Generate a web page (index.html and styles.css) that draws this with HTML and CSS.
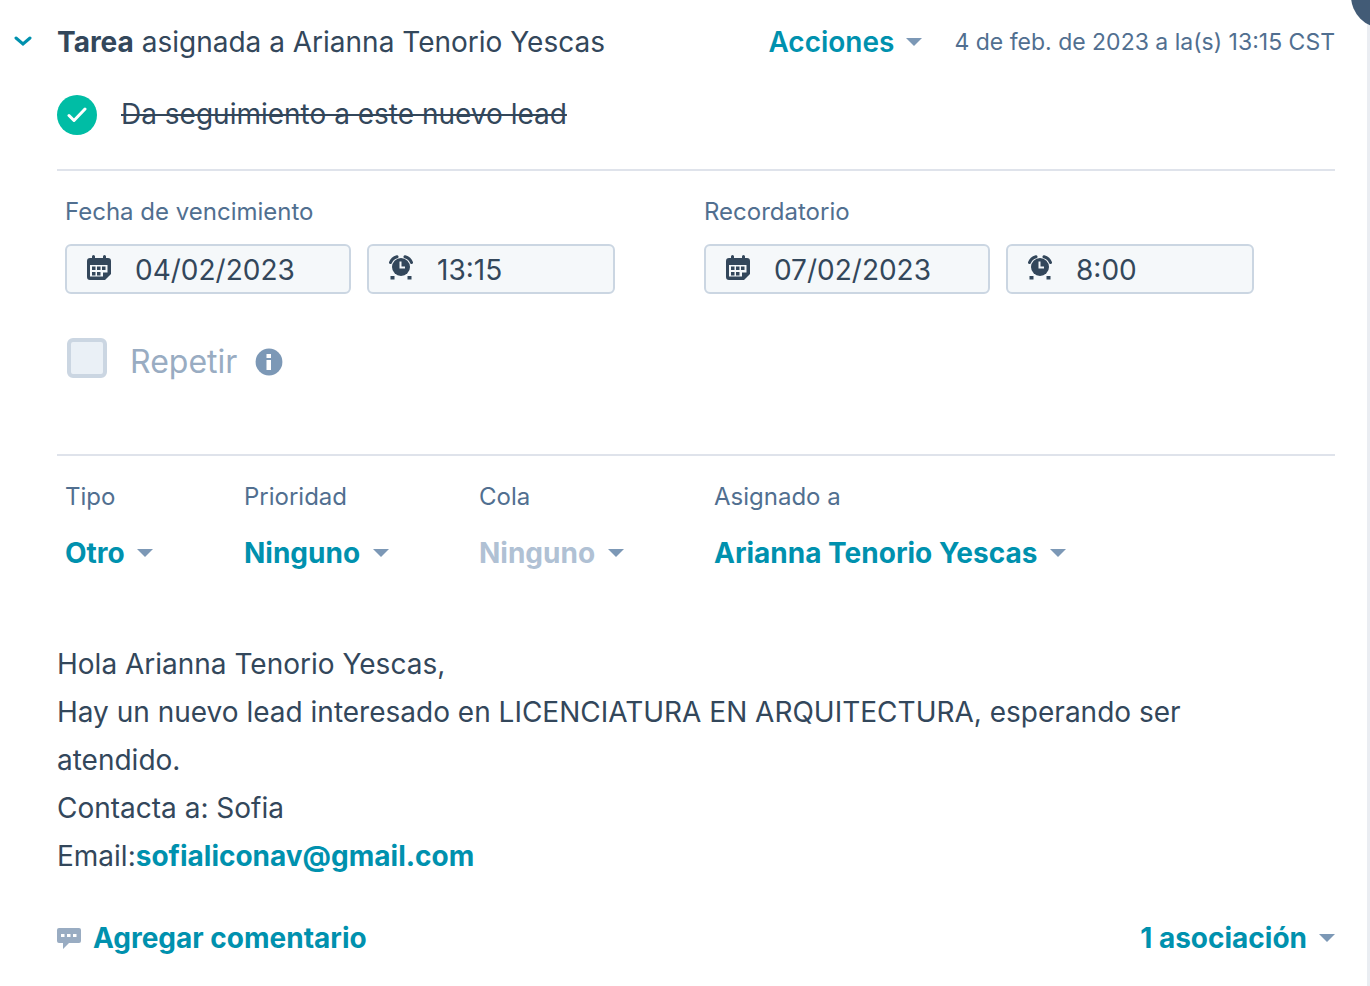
FILE: index.html
```html
<!DOCTYPE html>
<html lang="es">
<head>
<meta charset="utf-8">
<meta name="viewport" content="width=device-width, initial-scale=1">
<title>Tarea</title>
<link rel="stylesheet" href="styles.css">
</head>
<body>
<svg class="sprite" aria-hidden="true">
  <symbol id="calendar" viewBox="0 0 24 26">
    <path fill="currentColor" fill-rule="evenodd" d="M5 1.500a1.500 1.500 0 0 1 3 0V3h8V1.500a1.500 1.500 0 0 1 3 0V3h2a3 3 0 0 1 3 3v13l-6 6H3a3 3 0 0 1-3-3V6a3 3 0 0 1 3-3h2zM3 10v11.500h13V17.500h4.500V10z"/>
    <path fill="currentColor" d="M5 11.500h3.500V15H5zm5 0h3.500V15H10zm5 0h3.500V15H15zM5 17h3.500v3.500H5zm5 0h3.500v3.500H10z"/>
  </symbol>
  <symbol id="alarm" viewBox="0 0 24 26">
    <circle cx="12" cy="12" r="9" fill="currentColor"/>
    <path d="M11.500 6.500v6h4.500" fill="none" stroke="#f5f8fa" stroke-width="2"/>
    <path d="M1.500 7.500Q3 3 8 1.700M22.500 7.500Q21 3 16 1.700" fill="none" stroke="currentColor" stroke-width="3" stroke-linecap="round"/>
    <path fill="currentColor" d="M1.500 21h4v3.500h-4zm17 0h4v3.500h-4z"/>
  </symbol>
</svg>
<main class="card">
  <span class="corner"></span>
  <header class="head">
    <button class="toggle" aria-label="Contraer tarea"><svg width="18" height="12" viewBox="0 0 18 12"><path d="M2 2l7 6 7-6" fill="none" stroke="currentColor" stroke-width="3" stroke-linecap="round"/></svg></button>
    <h1 class="title"><strong>Tarea</strong> asignada a Arianna Tenorio Yescas</h1>
    <button class="link actions">Acciones<span class="caret"></span></button>
    <time class="stamp">4 de feb. de 2023 a la(s) 13:15 CST</time>
  </header>
  <div class="content">
    <section class="task">
      <button class="done" aria-label="Tarea completada"><svg width="20" height="16" viewBox="0 0 20 16"><path d="M2 8.500l5 5L18 2" fill="none" stroke="currentColor" stroke-width="3" stroke-linecap="round" stroke-linejoin="round"/></svg></button>
      <s class="subject">Da seguimiento a este nuevo lead</s>
    </section>
    <section class="dates">
      <div class="when">
        <label class="label" for="due">Fecha de vencimiento</label>
        <div class="pair">
          <div class="field date"><svg class="icon"><use href="#calendar"/></svg><input id="due" type="text" value="04/02/2023"></div>
          <div class="field hour"><svg class="icon"><use href="#alarm"/></svg><input type="text" value="13:15" aria-label="Hora de vencimiento"></div>
        </div>
      </div>
      <div class="when">
        <label class="label" for="remind">Recordatorio</label>
        <div class="pair">
          <div class="field date"><svg class="icon"><use href="#calendar"/></svg><input id="remind" type="text" value="07/02/2023"></div>
          <div class="field hour"><svg class="icon"><use href="#alarm"/></svg><input type="text" value="8:00" aria-label="Hora del recordatorio"></div>
        </div>
      </div>
      <div class="repeat">
        <input id="repeat" class="check" type="checkbox" disabled>
        <div class="repeat-text">
          <label for="repeat">Repetir</label>
          <svg width="28" height="28" viewBox="0 0 28 28"><circle cx="14" cy="14" r="13.400" fill="#7c98b6"/><path d="M11.500 6H16v4h-4.500zM11.500 12H16v10h-4.500z" fill="#fff"/></svg>
        </div>
      </div>
    </section>
    <section class="props">
      <div class="prop"><label class="label" for="type">Tipo</label><div class="pick"><select id="type"><option>Otro</option></select><span class="caret"></span></div></div>
      <div class="prop"><label class="label" for="priority">Prioridad</label><div class="pick"><select id="priority"><option>Ninguno</option></select><span class="caret"></span></div></div>
      <div class="prop"><label class="label" for="queue">Cola</label><div class="pick"><select id="queue" disabled><option>Ninguno</option></select><span class="caret"></span></div></div>
      <div class="prop"><label class="label" for="owner">Asignado a</label><div class="pick"><select id="owner"><option>Arianna Tenorio Yescas</option></select><span class="caret"></span></div></div>
    </section>
    <section class="note">
      <p>Hola Arianna Tenorio Yescas,</p>
      <p>Hay un nuevo lead interesado en LICENCIATURA EN ARQUITECTURA, esperando ser atendido.</p>
      <p>Contacta a: Sofia</p>
      <p>Email:<a href="mailto:sofialiconav@gmail.com">sofialiconav@gmail.com</a></p>
    </section>
    <footer class="foot">
      <button class="link"><svg class="bubble" width="24" height="21" viewBox="0 0 24 21"><path fill="#99acc2" fill-rule="evenodd" d="M2 0h20a2 2 0 0 1 2 2v11a2 2 0 0 1-2 2H12l-6 6v-6H2a2 2 0 0 1-2-2V2a2 2 0 0 1 2-2zM4 6v3h3.500V6zm6 0v3h3.500V6zm6 0v3h3.500V6z"/></svg>Agregar comentario</button>
      <button class="link">1 asociación<span class="caret"></span></button>
    </footer>
  </div>
</main>
</body>
</html>
```
FILE: styles.css
```css
* { box-sizing: border-box; }
body {
  margin: 0;
  background: #fff;
  color: #33475b;
  font: 400 28px/48px Inter, "Liberation Sans", sans-serif;
}
button, select, input { font: inherit; color: inherit; margin: 0; padding: 0; border: 0; background: none; }
button, select { cursor: pointer; }
.sprite { display: none; }
.card {
  position: relative;
  min-height: 100vh;
  padding: 18px 35px 18px 0;
  box-shadow: inset -3px 0 #eaedf2;
  overflow: hidden;
}
.corner {
  position: absolute;
  top: -36px;
  right: -45px;
  width: 64px;
  height: 64px;
  border-radius: 50%;
  background: #425b76;
}
.head { display: flex; align-items: center; }
.toggle { display: flex; width: 57px; padding-left: 14px; color: #0091ae; }
.title { flex: 1; margin: 0; font-size: 28px; font-weight: 400; }
.title strong { font-weight: 700; }
.link, .pick, .note a { color: #0091ae; font-weight: 700; text-decoration: none; }
.link { display: flex; align-items: center; gap: 12px; }
.link.actions { margin-right: 32px; font-weight: 600; }
.caret {
  width: 16px;
  border: 8px solid transparent;
  border-top-color: #7c98b6;
  border-bottom: 0;
}
.stamp, .label { color: #516f90; font-size: 24px; }
.stamp { font-size: 23px; }
.content { padding-left: 57px; }
.task {
  display: flex;
  gap: 24px;
  padding: 24px 0 31px;
  border-bottom: 2px solid #dfe3eb;
}
.done {
  display: flex;
  align-items: center;
  justify-content: center;
  width: 40px;
  height: 40px;
  margin-top: 5px;
  border-radius: 50%;
  background: #00bda5;
  color: #fff;
}
.subject { text-decoration-thickness: 2px; }
.dates {
  display: grid;
  grid-template-columns: 1fr 1fr;
  padding: 17px 0 68px;
  border-bottom: 2px solid #dfe3eb;
}
.when { padding: 0 81px 0 8px; }
.label { display: block; }
.pair { display: flex; gap: 16px; margin-top: 8px; }
.field {
  display: flex;
  align-items: center;
  gap: 24px;
  height: 50px;
  padding: 0 20px;
  border: 2px solid #cbd6e2;
  border-radius: 6px;
  background: #f5f8fa;
  min-width: 0;
}
.date { flex: 242 1 0; }
.hour { flex: 204 1 0; }
.field input { width: 100%; min-width: 0; padding-top: 2px; }
.icon { flex: none; width: 24px; height: 26px; margin-bottom: 2px; }
.repeat {
  grid-column: 1 / -1;
  display: flex;
  align-items: flex-start;
  gap: 23px;
  margin: 44px 0 0 10px;
  color: #99acc2;
  font-size: 32px;
}
.check {
  appearance: none;
  width: 40px;
  height: 40px;
  border: 4px solid #cbd6e2;
  border-radius: 6px;
  background: #eaf0f6;
}
.repeat-text { display: flex; align-items: center; gap: 18px; }
.props {
  display: grid;
  grid-template-columns: 179fr 235fr 235fr 629fr;
  padding: 17px 0 63px;
}
.prop { padding-left: 8px; }
.pick { display: flex; align-items: center; gap: 12px; margin-top: 8px; }
.pick select { appearance: none; }
.pick select:disabled { color: #b0c1d4; opacity: 1; }
.note { padding-right: 48px; }
.note p { margin: 0; }
.foot { display: flex; justify-content: space-between; margin-top: 34px; }
```
